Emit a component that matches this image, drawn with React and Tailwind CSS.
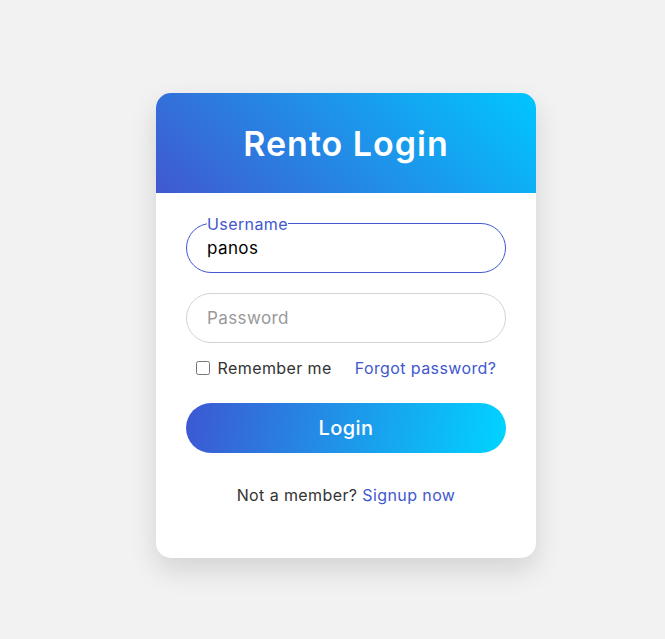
import React from "react";

const FONT = { fontFamily: "Inter, 'Noto Sans', sans-serif" };

export default function App() {
  return (
    <div className="flex min-h-[639px] w-full items-start justify-center bg-[#f2f2f2] pl-[27px] pt-[93px]" style={FONT}>
      <div className="w-[380px] overflow-hidden rounded-[15px] bg-white shadow-[0_12px_28px_rgba(0,0,0,0.13)]">
        <div className="flex h-[100px] items-center justify-center bg-linear-[225deg] from-[#00c6ff] to-[#4158d0]">
          <h1 className="text-[34px] font-semibold tracking-[1px] text-white">Rento Login</h1>
        </div>

        <form className="flex flex-col px-[30px] pt-[30px] pb-[51px] tracking-[0.4px]">
          <div className="relative h-[50px] rounded-full border border-[#4158d0]">
            <label className="absolute left-[20px] top-0 -translate-y-1/2 bg-white text-[16px] leading-[18px] text-[#4158d0]">
              Username
            </label>
            <input
              type="text"
              defaultValue="panos"
              className="h-full w-full rounded-full bg-transparent pl-[20px] text-[17px] tracking-[0.4px] text-black outline-none"
            />
          </div>

          <div className="mt-[20px] h-[50px] rounded-full border border-[#d3d3d3]">
            <input
              type="password"
              placeholder="Password"
              className="h-full w-full rounded-full bg-transparent pl-[20px] text-[17px] tracking-[0.4px] text-black outline-none placeholder:text-[#999]"
            />
          </div>

          <div className="mt-[13px] flex items-center justify-center gap-[23px] text-[16px]">
            <label className="flex items-center gap-[8px] text-[#333]">
              <input type="checkbox" className="h-[14px] w-[14px]" />
              Remember me
            </label>
            <a href="#" className="text-[#4158d0]">Forgot password?</a>
          </div>

          <button
            type="button"
            className="mt-[23px] h-[50px] rounded-full bg-linear-[100deg] from-[#3d57d3] to-[#00d4ff] text-[20px] font-medium text-white"
          >
            Login
          </button>

          <p className="mt-[30px] text-center text-[16px] leading-[24px] text-[#333]">
            Not a member? <a href="#" className="text-[#4158d0]">Signup now</a>
          </p>
        </form>
      </div>
    </div>
  );
}
